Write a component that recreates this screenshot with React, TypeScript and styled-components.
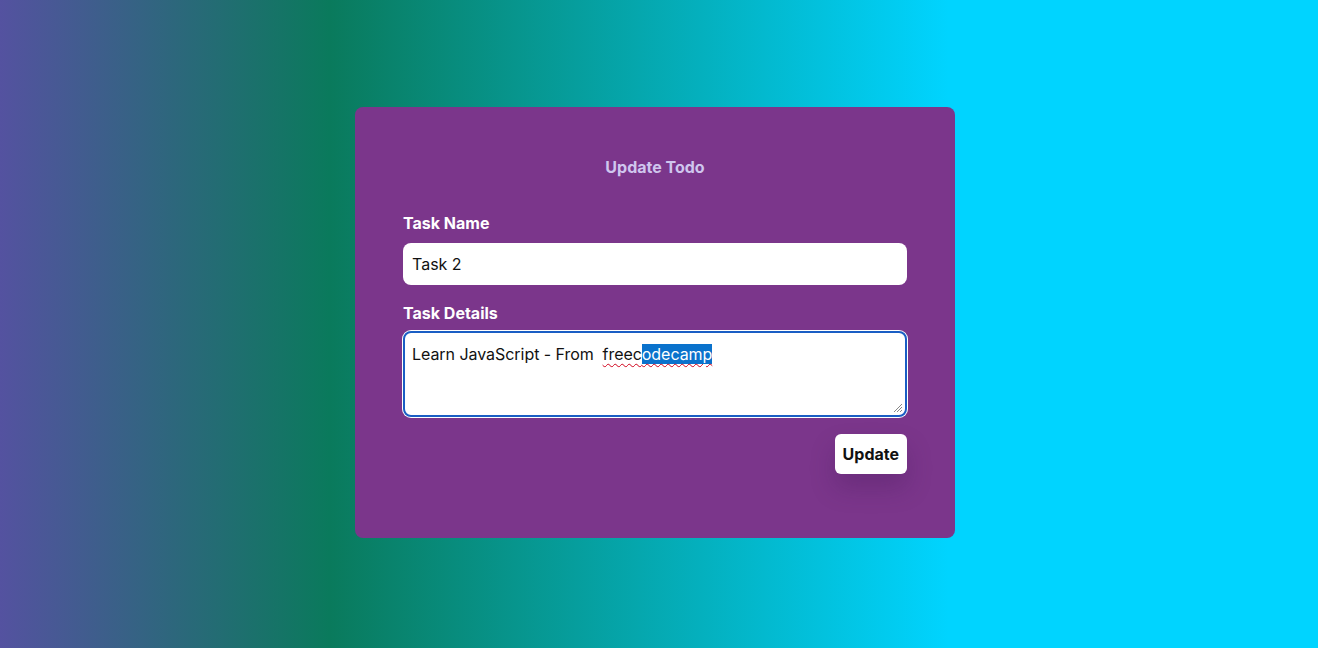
import React from 'react';
import styled, { createGlobalStyle } from 'styled-components';

const GlobalStyle = createGlobalStyle`
  html, body {
    margin: 0;
    padding: 0;
  }
  body {
    font-family: 'Inter', 'Liberation Sans', sans-serif;
  }
`;

const Page = styled.div`
  min-height: 648px;
  box-sizing: border-box;
  padding: 0 8px 4px 0;
  display: flex;
  align-items: center;
  justify-content: center;
  background: linear-gradient(
    90deg,
    rgb(84, 82, 160) 0%,
    rgb(10, 122, 92) 25%,
    rgb(0, 212, 255) 72%,
    rgb(0, 212, 255) 100%
  );
`;

const Card = styled.form`
  width: 600px;
  box-sizing: border-box;
  background: #7b368b;
  border-radius: 8px;
  padding: 40px 48px 64px;
  display: flex;
  flex-direction: column;
`;

const Title = styled.h3`
  margin: 0 0 26px;
  text-align: center;
  color: #cfc6ee;
  font-size: 16px;
  font-weight: 700;
  line-height: 40px;
`;

const Label = styled.label<{ $gap?: number }>`
  display: block;
  color: #ffffff;
  font-size: 16px;
  font-weight: 700;
  line-height: 20px;
  margin-bottom: ${(p) => p.$gap ?? 10}px;
`;

const Input = styled.input`
  box-sizing: border-box;
  width: 100%;
  height: 42px;
  border: none;
  border-radius: 8px;
  padding: 0 9px;
  font-family: 'Inter', 'Liberation Sans', sans-serif;
  font-size: 16px;
  color: #111;
  background: #fff;
  margin-bottom: 18px;
  outline: none;
`;

const TextBox = styled.div`
  position: relative;
  box-sizing: border-box;
  width: 100%;
  height: 86px;
  background: #fff;
  border-radius: 8px;
  border: 2px solid #1a5ec4;
  box-shadow: 0 0 0 1px #ffffff;
  padding: 11px 7px 0;
  font-size: 16px;
  line-height: 20px;
  letter-spacing: -0.05px;
  color: #111;
  white-space: pre;
`;

const Misspelled = styled.span`
  text-decoration: underline wavy #d0021b;
  text-decoration-thickness: 1px;
  text-underline-offset: 3px;
`;

const Selected = styled.span`
  background: #0a72cc;
  color: #fff;
`;

const Grip = styled.svg`
  position: absolute;
  right: 2px;
  bottom: 2px;
`;

const Actions = styled.div`
  display: flex;
  justify-content: flex-end;
  margin-top: 17px;
`;

const Button = styled.button`
  height: 40px;
  padding: 0 8px;
  border: none;
  border-radius: 6px;
  background: #fff;
  color: #111;
  font-family: 'Inter', 'Liberation Sans', sans-serif;
  font-size: 16px;
  font-weight: 700;
  cursor: pointer;
  box-shadow: 0 14px 24px rgba(60, 20, 80, 0.25);
`;

export default function App() {
  return (
    <>
      <GlobalStyle />
      <Page>
        <Card onSubmit={(e) => e.preventDefault()}>
          <Title>Update Todo</Title>
          <Label>Task Name</Label>
          <Input defaultValue="Task 2" />
          <Label $gap={8}>Task Details</Label>
          <TextBox>
            {'Learn JavaScript - From  '}
            <Misspelled>
              freec<Selected>odecamp</Selected>
            </Misspelled>
            <Grip width="12" height="12" viewBox="0 0 12 12">
              <path d="M11 3 L3 11 M11 6 L6 11 M11 9 L9 11" stroke="#888" strokeWidth="1" />
            </Grip>
          </TextBox>
          <Actions>
            <Button type="submit">Update</Button>
          </Actions>
        </Card>
      </Page>
    </>
  );
}
